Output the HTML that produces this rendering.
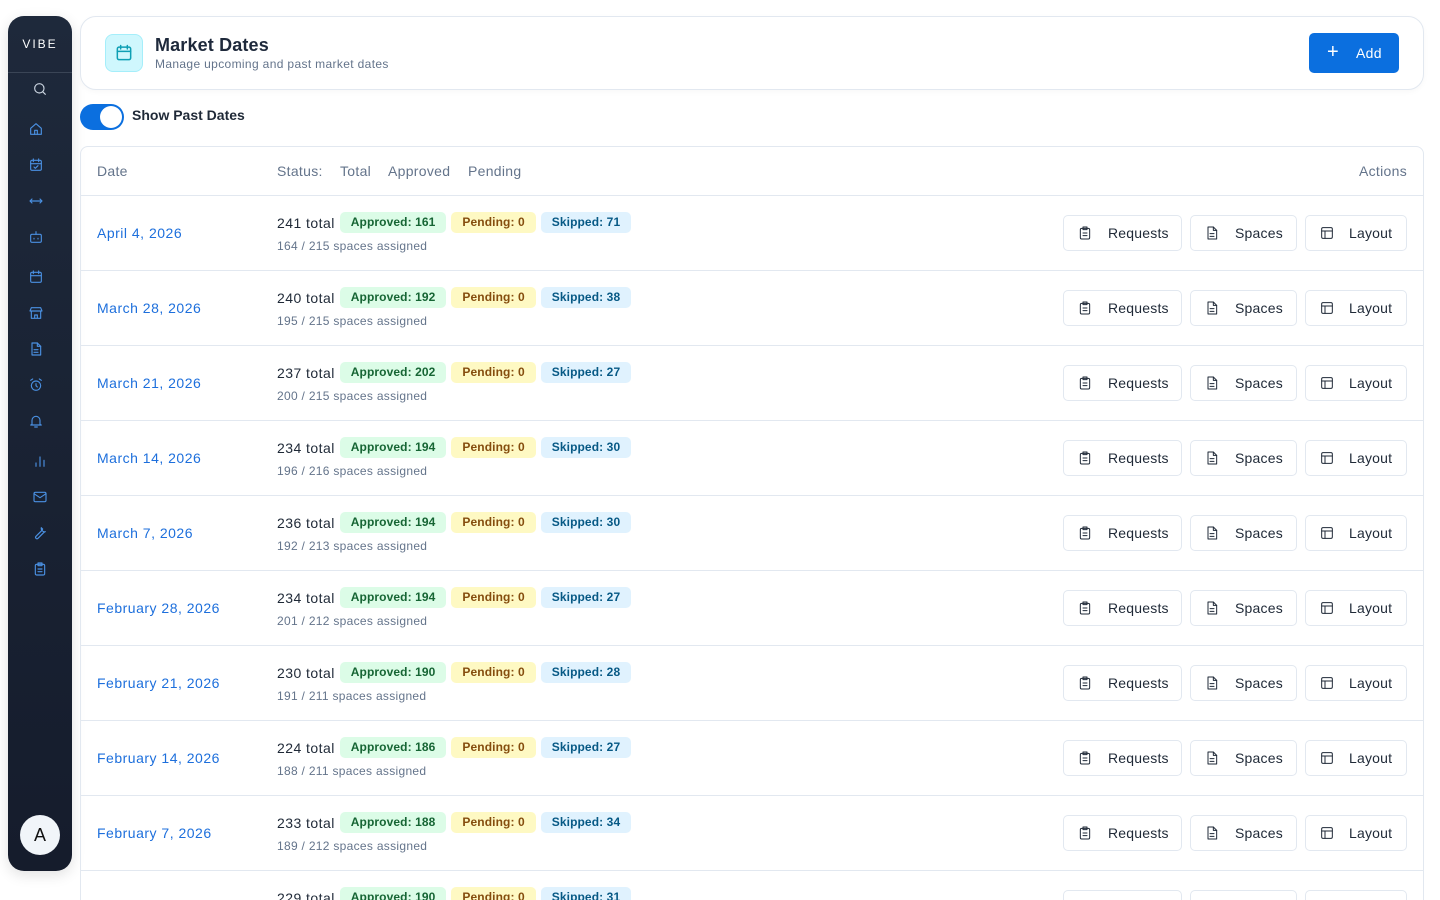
<!DOCTYPE html>
<html><head><meta charset="utf-8"><style>
*{box-sizing:border-box;margin:0;padding:0}
html,body{width:1440px;height:900px;overflow:hidden}
body{background:#fff;font-family:"Liberation Sans",Arial,sans-serif;position:relative;color:#1f2937}
.sb{position:absolute;left:8px;top:16px;width:64px;height:855px;background:linear-gradient(#1e293b,#151c2c);border-radius:16px;box-shadow:0 4px 14px rgba(0,0,0,.12)}
.logo{position:absolute;left:0;width:64px;top:21px;text-align:center;color:#fff;font-size:12px;letter-spacing:2px}
.sdiv{position:absolute;left:0;right:0;top:56px;border-top:1px solid #3a4556}
.ic{position:absolute;width:16px;height:16px}
.ic svg{width:16px;height:16px;fill:none;stroke:#4a90e2;stroke-width:1.7;stroke-linecap:round;stroke-linejoin:round}
.av{position:absolute;left:12px;top:799px;width:40px;height:40px;border-radius:50%;background:#f1f5f9;text-align:center;line-height:40px;font-size:18px;color:#111}
.card{position:absolute;left:80px;top:16px;width:1344px;height:74px;border:1px solid #e2e8f0;border-radius:16px;background:#fff;box-shadow:0 2px 6px rgba(0,0,0,.03)}
.hico{position:absolute;left:24px;top:17px;width:38px;height:38px;border-radius:8px;background:#cff7fd;border:1px solid #a5eefa}
.title{position:absolute;left:74px;top:18px;font-size:18px;font-weight:bold;color:#1e293b;letter-spacing:.15px}
.sub{position:absolute;left:74px;top:40px;font-size:12px;color:#64748b;letter-spacing:.35px}
.add{position:absolute;left:1228px;top:16px;width:90px;height:40px;background:#0b6fdf;border-radius:5px;color:#fff;font-size:14px}
.tg{position:absolute;left:80px;top:104px;width:44px;height:26px;border-radius:13px;background:#0b6fdf}
.tg:after{content:"";position:absolute;right:2px;top:2px;width:22px;height:22px;border-radius:50%;background:#fff}
.tgl{position:absolute;left:132px;top:107px;font-size:14px;font-weight:bold;color:#1f2937}
.tbl{position:absolute;left:80px;top:146px;width:1344px;height:780px;border:1px solid #e2e8f0;border-radius:8px}
.th{position:absolute;top:16px;font-size:14px;color:#64748b;letter-spacing:.3px}
.row{position:absolute;left:0;width:1342px;height:75px;border-top:1px solid #e2e8f0}
.dt{position:absolute;left:16px;top:29px;font-size:14px;color:#1d6fdc;letter-spacing:.5px}
.tot{position:absolute;left:196px;top:16px;font-size:14px;color:#1f2937;display:flex;align-items:center;white-space:nowrap;letter-spacing:.45px}
.b{display:inline-block;height:21px;line-height:21px;padding:0 11px;border-radius:5px;font-size:12px;font-weight:bold;margin-left:5px;letter-spacing:.1px}
.bg{background:#dcfce7;color:#166534}.by{background:#fef9c3;color:#854d0e}.bb{background:#e0f2fe;color:#075985}
.sa{position:absolute;left:196px;top:43px;font-size:12px;color:#64748b;letter-spacing:.3px}
.btn{position:absolute;top:19px;height:36px;border:1px solid #e2e8f0;border-radius:5px;font-size:14px;color:#1f2937;background:#fff}
.btn svg{position:absolute;left:13px;top:9px;width:16px;height:16px;fill:none;stroke:#1f2937;stroke-width:1.5;stroke-linecap:round;stroke-linejoin:round}
.btn span{position:absolute;top:9px;letter-spacing:.2px}
</style></head><body>
<div class="sb">
<div class="logo">VIBE</div><div class="sdiv"></div>
<div class="ic" style="left:24px;top:65px"><svg viewBox="0 0 24 24" style="stroke:#cbd5e1"><circle cx="11" cy="11" r="7"/><path d="M20 20l-4-4"/></svg></div>
<div class="ic" style="left:20px;top:105px"><svg viewBox="0 0 24 24"><path d="M4 11l8-7 8 7v9H4z"/><path d="M10 20v-6h4v6"/></svg></div>
<div class="ic" style="left:20px;top:141px"><svg viewBox="0 0 24 24"><rect x="4" y="5" width="16" height="15" rx="2"/><path d="M8 3v4M16 3v4M4 10h16M9 15l2 2 4-4"/></svg></div>
<div class="ic" style="left:20px;top:177px"><svg viewBox="0 0 24 24"><path d="M3 12h18M6 9l-3 3 3 3M18 9l3 3-3 3"/></svg></div>
<div class="ic" style="left:20px;top:213px"><svg viewBox="0 0 24 24"><rect x="4" y="8" width="16" height="12" rx="2"/><path d="M12 4v4M9 14v1M15 14v1"/></svg></div>
<div class="ic" style="left:20px;top:253px"><svg viewBox="0 0 24 24"><rect x="4" y="5" width="16" height="15" rx="2"/><path d="M8 3v4M16 3v4M4 10h16"/></svg></div>
<div class="ic" style="left:20px;top:289px"><svg viewBox="0 0 24 24"><path d="M3 9l2-5h14l2 5zM3 9h18M5 9v11h14V9M10 20v-5h4v5"/></svg></div>
<div class="ic" style="left:20px;top:325px"><svg viewBox="0 0 24 24"><path d="M6 3h8l5 5v13H6z"/><path d="M14 3v5h5M9 13h6M9 17h6"/></svg></div>
<div class="ic" style="left:20px;top:361px"><svg viewBox="0 0 24 24"><circle cx="12" cy="13" r="7"/><path d="M12 10v3l2 2M4 5l3-2M20 5l-3-2"/></svg></div>
<div class="ic" style="left:20px;top:397px"><svg viewBox="0 0 24 24"><path d="M6 17V11a6 6 0 0112 0v6l2 1H4zM10 21h4"/></svg></div>
<div class="ic" style="left:24px;top:437px"><svg viewBox="0 0 24 24"><path d="M6 20v-5M12 20V6M18 20v-9"/></svg></div>
<div class="ic" style="left:24px;top:473px"><svg viewBox="0 0 24 24"><rect x="3" y="5" width="18" height="14" rx="2"/><path d="M3 7l9 6 9-6"/></svg></div>
<div class="ic" style="left:24px;top:509px"><svg viewBox="0 0 24 24"><path d="M14 4a5 5 0 006 6l-2 1-9 9a2 2 0 01-3-3l9-9 1-2a5 5 0 01-2-2z"/></svg></div>
<div class="ic" style="left:24px;top:545px"><svg viewBox="0 0 24 24"><rect x="5" y="5" width="14" height="16" rx="2"/><path d="M9 3h6v4H9zM9 12h6M9 16h6"/></svg></div>
<div class="av">A</div>
</div>
<div class="card">
<div class="hico"><svg viewBox="0 0 24 24" width="20" height="20" style="position:absolute;left:8px;top:8px;fill:none;stroke:#0e9fb4;stroke-width:1.8;stroke-linecap:round"><rect x="4" y="5" width="16" height="15" rx="2"/><path d="M8 3v4M16 3v4M4 10h16"/></svg></div>
<div class="title">Market Dates</div>
<div class="sub">Manage upcoming and past market dates</div>
<div class="add"><span style="position:absolute;left:18px;top:8px;font-size:20px;font-weight:300">+</span><span style="position:absolute;left:47px;top:12px;letter-spacing:.3px">Add</span></div>
</div>
<div class="tg"></div><div class="tgl">Show Past Dates</div>
<div class="tbl">
<div class="th" style="left:16px">Date</div>
<div class="th" style="left:196px">Status:</div>
<div class="th" style="left:259px">Total</div>
<div class="th" style="left:307px">Approved</div>
<div class="th" style="left:387px">Pending</div>
<div class="th" style="right:16px">Actions</div>
<div id="rows"></div>
</div>
<script>
var d=[["April 4, 2026",241,161,0,71,164,215],["March 28, 2026",240,192,0,38,195,215],["March 21, 2026",237,202,0,27,200,215],["March 14, 2026",234,194,0,30,196,216],["March 7, 2026",236,194,0,30,192,213],["February 28, 2026",234,194,0,27,201,212],["February 21, 2026",230,190,0,28,191,211],["February 14, 2026",224,186,0,27,188,211],["February 7, 2026",233,188,0,34,189,212],["January 31, 2026",229,190,0,31,190,212]];
var ico1='<svg viewBox="0 0 24 24"><rect x="5" y="5" width="14" height="16" rx="2"/><path d="M9 3h6v4H9zM9 12h6M9 16h6"/></svg>';
var ico2='<svg viewBox="0 0 24 24"><path d="M6 3h8l5 5v13H6z"/><path d="M14 3v5h5M9 13h6M9 17h6"/></svg>';
var ico3='<svg viewBox="0 0 24 24"><rect x="4" y="4" width="16" height="16" rx="2"/><path d="M4 9h16M9 9v11"/></svg>';
var h='';d.forEach(function(r,i){h+='<div class="row" style="top:'+(48+i*75)+'px"><div class="dt">'+r[0]+'</div><div class="tot">'+r[1]+' total <span class="b bg">Approved: '+r[2]+'</span><span class="b by">Pending: '+r[3]+'</span><span class="b bb">Skipped: '+r[4]+'</span></div><div class="sa">'+r[5]+' / '+r[6]+' spaces assigned</div><div class="btn" style="left:982px;width:119px">'+ico1+'<span style="left:44px">Requests</span></div><div class="btn" style="left:1109px;width:107px">'+ico2+'<span style="left:44px">Spaces</span></div><div class="btn" style="left:1224px;width:102px">'+ico3+'<span style="left:43px">Layout</span></div></div>'});
document.getElementById('rows').innerHTML=h;
</script>
</body></html>
